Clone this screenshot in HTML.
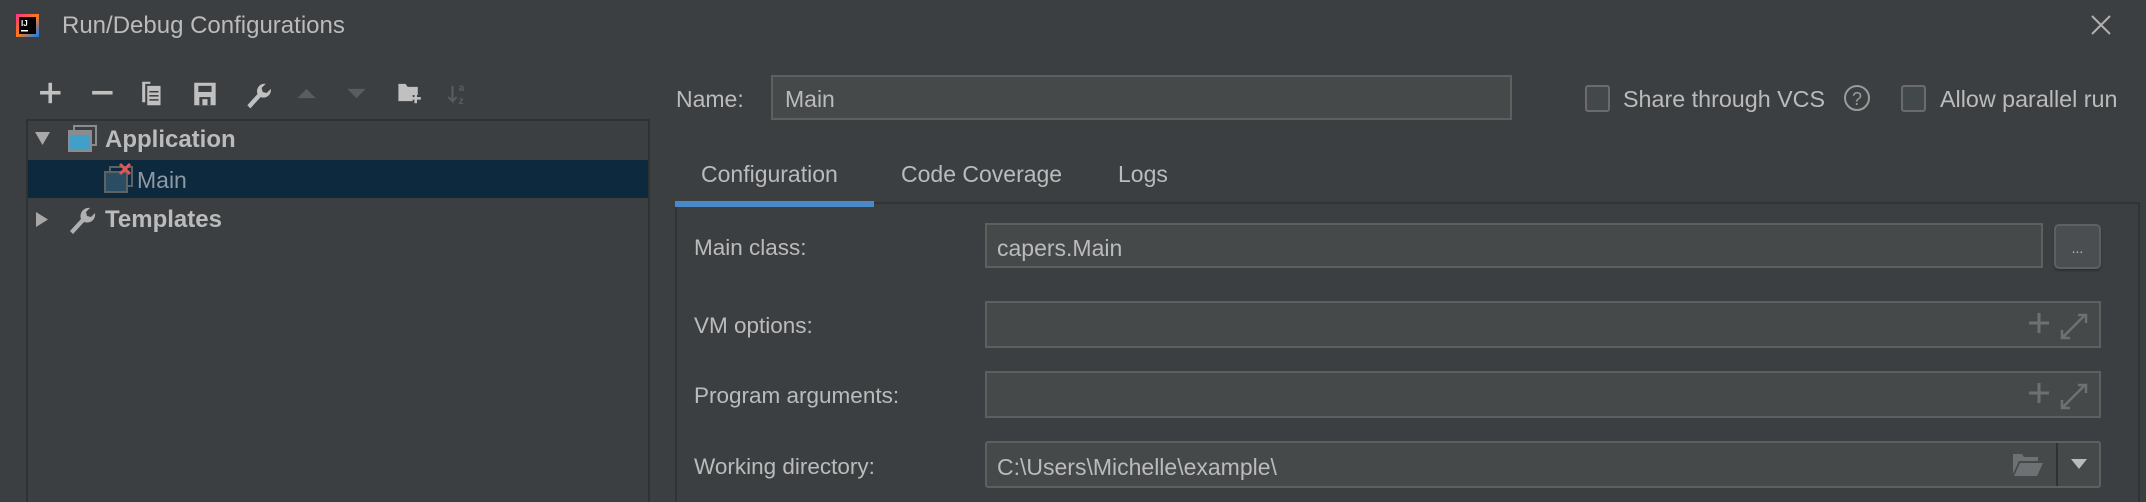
<!DOCTYPE html>
<html><head><meta charset="utf-8"><style>
*{margin:0;padding:0;box-sizing:border-box}
html,body{width:2146px;height:502px;overflow:hidden}
body{background:#3c3f41;font-family:"Liberation Sans",sans-serif;color:#bbbbbb;position:relative;font-size:22px}
.a{position:absolute}
.lbl{position:absolute;font-size:22.5px;line-height:26px;white-space:nowrap}
.fld{position:absolute;background:#45494a;border:2px solid #5e6060}
.cb{position:absolute;border:2px solid #6b6b6b;border-radius:3px;background:#43494a}
</style></head><body>
<svg class="a" style="left:16px;top:14px" width="23" height="23" viewBox="0 0 23 23"><defs><linearGradient id="g" x1="0" y1="0" x2="1" y2="1"><stop offset="0" stop-color="#fc318c"/><stop offset="0.5" stop-color="#fe7a17"/><stop offset="1" stop-color="#087cfa"/></linearGradient></defs><rect width="23" height="23" fill="url(#g)"/><rect x="3" y="3" width="17" height="17" fill="#000"/><text x="5" y="12" font-size="8" font-weight="bold" fill="#fff" font-family="Liberation Sans">IJ</text><rect x="5" y="16" width="7" height="1.5" fill="#fff"/></svg>
<div class="lbl" style="left:62px;top:13px;font-size:24px">Run/Debug Configurations</div>
<svg class="a" style="left:2090px;top:14px" width="22" height="22" viewBox="0 0 22 22"><path d="M2 2L20 20M20 2L2 20" stroke="#b0b0b0" stroke-width="2"/></svg>
<svg class="a" style="left:36px;top:75px" width="490" height="36" viewBox="0 0 480 30" fill="#c0c0c0">
<rect x="4" y="13" width="20" height="3.5"/><rect x="12.2" y="5" width="3.5" height="20"/>
<rect x="55" y="13" width="20" height="3.5"/>
<path d="M104 4h8v2h-5v18h-3z"/><path d="M109 8h13v19h-13z"/><rect x="111" y="13" width="9" height="1.5" fill="#3c3f41"/><rect x="111" y="17" width="9" height="1.5" fill="#3c3f41"/><rect x="111" y="21" width="9" height="1.5" fill="#3c3f41"/>
<path d="M155 5h21v22h-21z"/><rect x="159" y="8" width="13" height="6" fill="#3c3f41"/><rect x="160" y="19" width="11" height="8" fill="#3c3f41"/><rect x="163" y="21" width="5" height="6"/>
<path d="M207 27l10-11c-2-5 2-11 8-10l-4 4 1 4 4 1 4-4c1 6-5 10-10 8l-10 11z"/>
<path d="M256 20l9-9 9 9z" fill="#5a5d5f"/><path d="M305 11l9 9 9-9z" fill="#5a5d5f"/>
<path d="M355 6h7l2 3h10v8h-5v6h-14z"/><rect x="367" y="19" width="10" height="2.5"/><rect x="370.7" y="15" width="2.5" height="10"/>
<path d="M408 8v15l-4-4m4 4l4-4" stroke="#5a5d5f" stroke-width="2" fill="none"/><text x="414" y="13" font-size="10" fill="#5a5d5f" font-family="Liberation Sans" font-weight="bold">a</text><text x="414" y="26" font-size="10" fill="#5a5d5f" font-family="Liberation Sans" font-weight="bold">z</text>
</svg>
<div class="a" style="left:26px;top:119px;width:624px;height:400px;border:2px solid #2f3133"></div>
<div class="a" style="left:28px;top:160px;width:620px;height:38px;background:#0d293e"></div>
<svg class="a" style="left:33px;top:128px" width="20" height="20"><path d="M2 4h15l-7.5 13z" fill="#a8a8a8"/></svg>
<svg class="a" style="left:68px;top:125px" width="30" height="30"><rect x="6" y="1" width="22" height="19" fill="none" stroke="#8a8d8f" stroke-width="2"/><rect x="1" y="6" width="22" height="20" fill="#40a0c8" stroke="#8a8d8f" stroke-width="2"/><rect x="1" y="6" width="22" height="4" fill="#8a8d8f"/></svg>
<div class="lbl" style="left:105px;top:127px;font-weight:bold;font-size:24px">Application</div>
<svg class="a" style="left:104px;top:162px" width="30" height="32"><rect x="6" y="5" width="22" height="19" fill="none" stroke="#5e6265" stroke-width="2"/><rect x="1" y="10" width="22" height="20" fill="#2b4d63" stroke="#5e6265" stroke-width="2"/><path d="M16 2l10 10M26 2l-10 10" stroke="#e05555" stroke-width="3"/></svg>
<div class="lbl" style="left:137px;top:167px;color:#8d9aa5;font-size:23px">Main</div>
<svg class="a" style="left:33px;top:210px" width="20" height="20"><path d="M3 2v15l12-7.5z" fill="#a8a8a8"/></svg>
<svg class="a" style="left:68px;top:204px" width="30" height="30" fill="#b0b0b0"><path d="M2 27l11-12c-2-5 2-12 9-11l-4 4 1 4 4 1 4-4c1 7-5 11-11 9l-11 12z"/></svg>
<div class="lbl" style="left:105px;top:207px;font-weight:bold;font-size:24px">Templates</div>
<div class="lbl" style="left:676px;top:86px;font-size:23px">Name:</div>
<div class="fld" style="left:771px;top:75px;width:741px;height:45px"></div>
<div class="lbl" style="left:785px;top:86px;font-size:23px">Main</div>
<div class="cb" style="left:1585px;top:85px;width:25px;height:27px"></div>
<div class="lbl" style="left:1623px;top:86px;font-size:23.3px">Share through VCS</div>
<svg class="a" style="left:1843px;top:84px" width="28" height="28"><circle cx="14" cy="14" r="12" fill="none" stroke="#9a9a9a" stroke-width="2"/><text x="14" y="21" text-anchor="middle" font-size="18" fill="#9a9a9a" font-family="Liberation Sans">?</text></svg>
<div class="cb" style="left:1901px;top:85px;width:25px;height:27px"></div>
<div class="lbl" style="left:1940px;top:86px;font-size:23.3px">Allow parallel run</div>
<div class="lbl" style="left:701px;top:161px;font-size:23px">Configuration</div>
<div class="lbl" style="left:901px;top:161px;font-size:23px">Code Coverage</div>
<div class="lbl" style="left:1118px;top:161px;font-size:23px">Logs</div>
<div class="a" style="left:675px;top:202px;width:1465px;height:300px;border:2px solid #313335;border-bottom:none"></div>
<div class="a" style="left:675px;top:201px;width:199px;height:6px;background:#4a88c7"></div>
<div class="lbl" style="left:694px;top:235px">Main class:</div>
<div class="fld" style="left:985px;top:223px;width:1058px;height:45px"></div>
<div class="lbl" style="left:997px;top:235px;font-size:23px">capers.Main</div>
<div class="a" style="left:2054px;top:224px;width:47px;height:45px;background:#4a4e50;border:2px solid #5e6060;border-radius:5px;box-shadow:0 2px 2px #2e3032;text-align:center;font-size:14px;line-height:44px">...</div>
<div class="lbl" style="left:694px;top:313px">VM options:</div>
<div class="fld" style="left:985px;top:301px;width:1116px;height:47px"></div>
<div class="lbl" style="left:694px;top:383px">Program arguments:</div>
<div class="fld" style="left:985px;top:371px;width:1116px;height:47px"></div>
<svg class="a" style="left:2026px;top:310px" width="66" height="100" fill="none" stroke="#6e7173" stroke-width="3">
<path d="M13 3v20M3 13h20"/><path d="M44 20l15-15M52 5h8v8M36 28l15-15M36 20v8h8" stroke-width="2.5"/>
<path d="M13 73v20M3 83h20"/><path d="M44 90l15-15M52 75h8v8M36 98l15-15M36 90v8h8" stroke-width="2.5"/>
</svg>
<div class="lbl" style="left:694px;top:454px">Working directory:</div>
<div class="fld" style="left:985px;top:441px;width:1116px;height:47px;border-radius:3px"></div>
<div class="a" style="left:2056px;top:443px;width:2px;height:43px;background:#2f3133"></div>
<div class="lbl" style="left:997px;top:454px;font-size:23px">C:\Users\Michelle\example\</div>
<svg class="a" style="left:2012px;top:452px" width="32" height="26" fill="#6e7173"><path d="M1 2h9l2 3h14v4H7L1 22z"/><path d="M8 11h23l-6 13H2z"/></svg>
<svg class="a" style="left:2069px;top:456px" width="20" height="16"><path d="M2 3h16l-8 10z" fill="#bbbbbb"/></svg>
</body></html>
